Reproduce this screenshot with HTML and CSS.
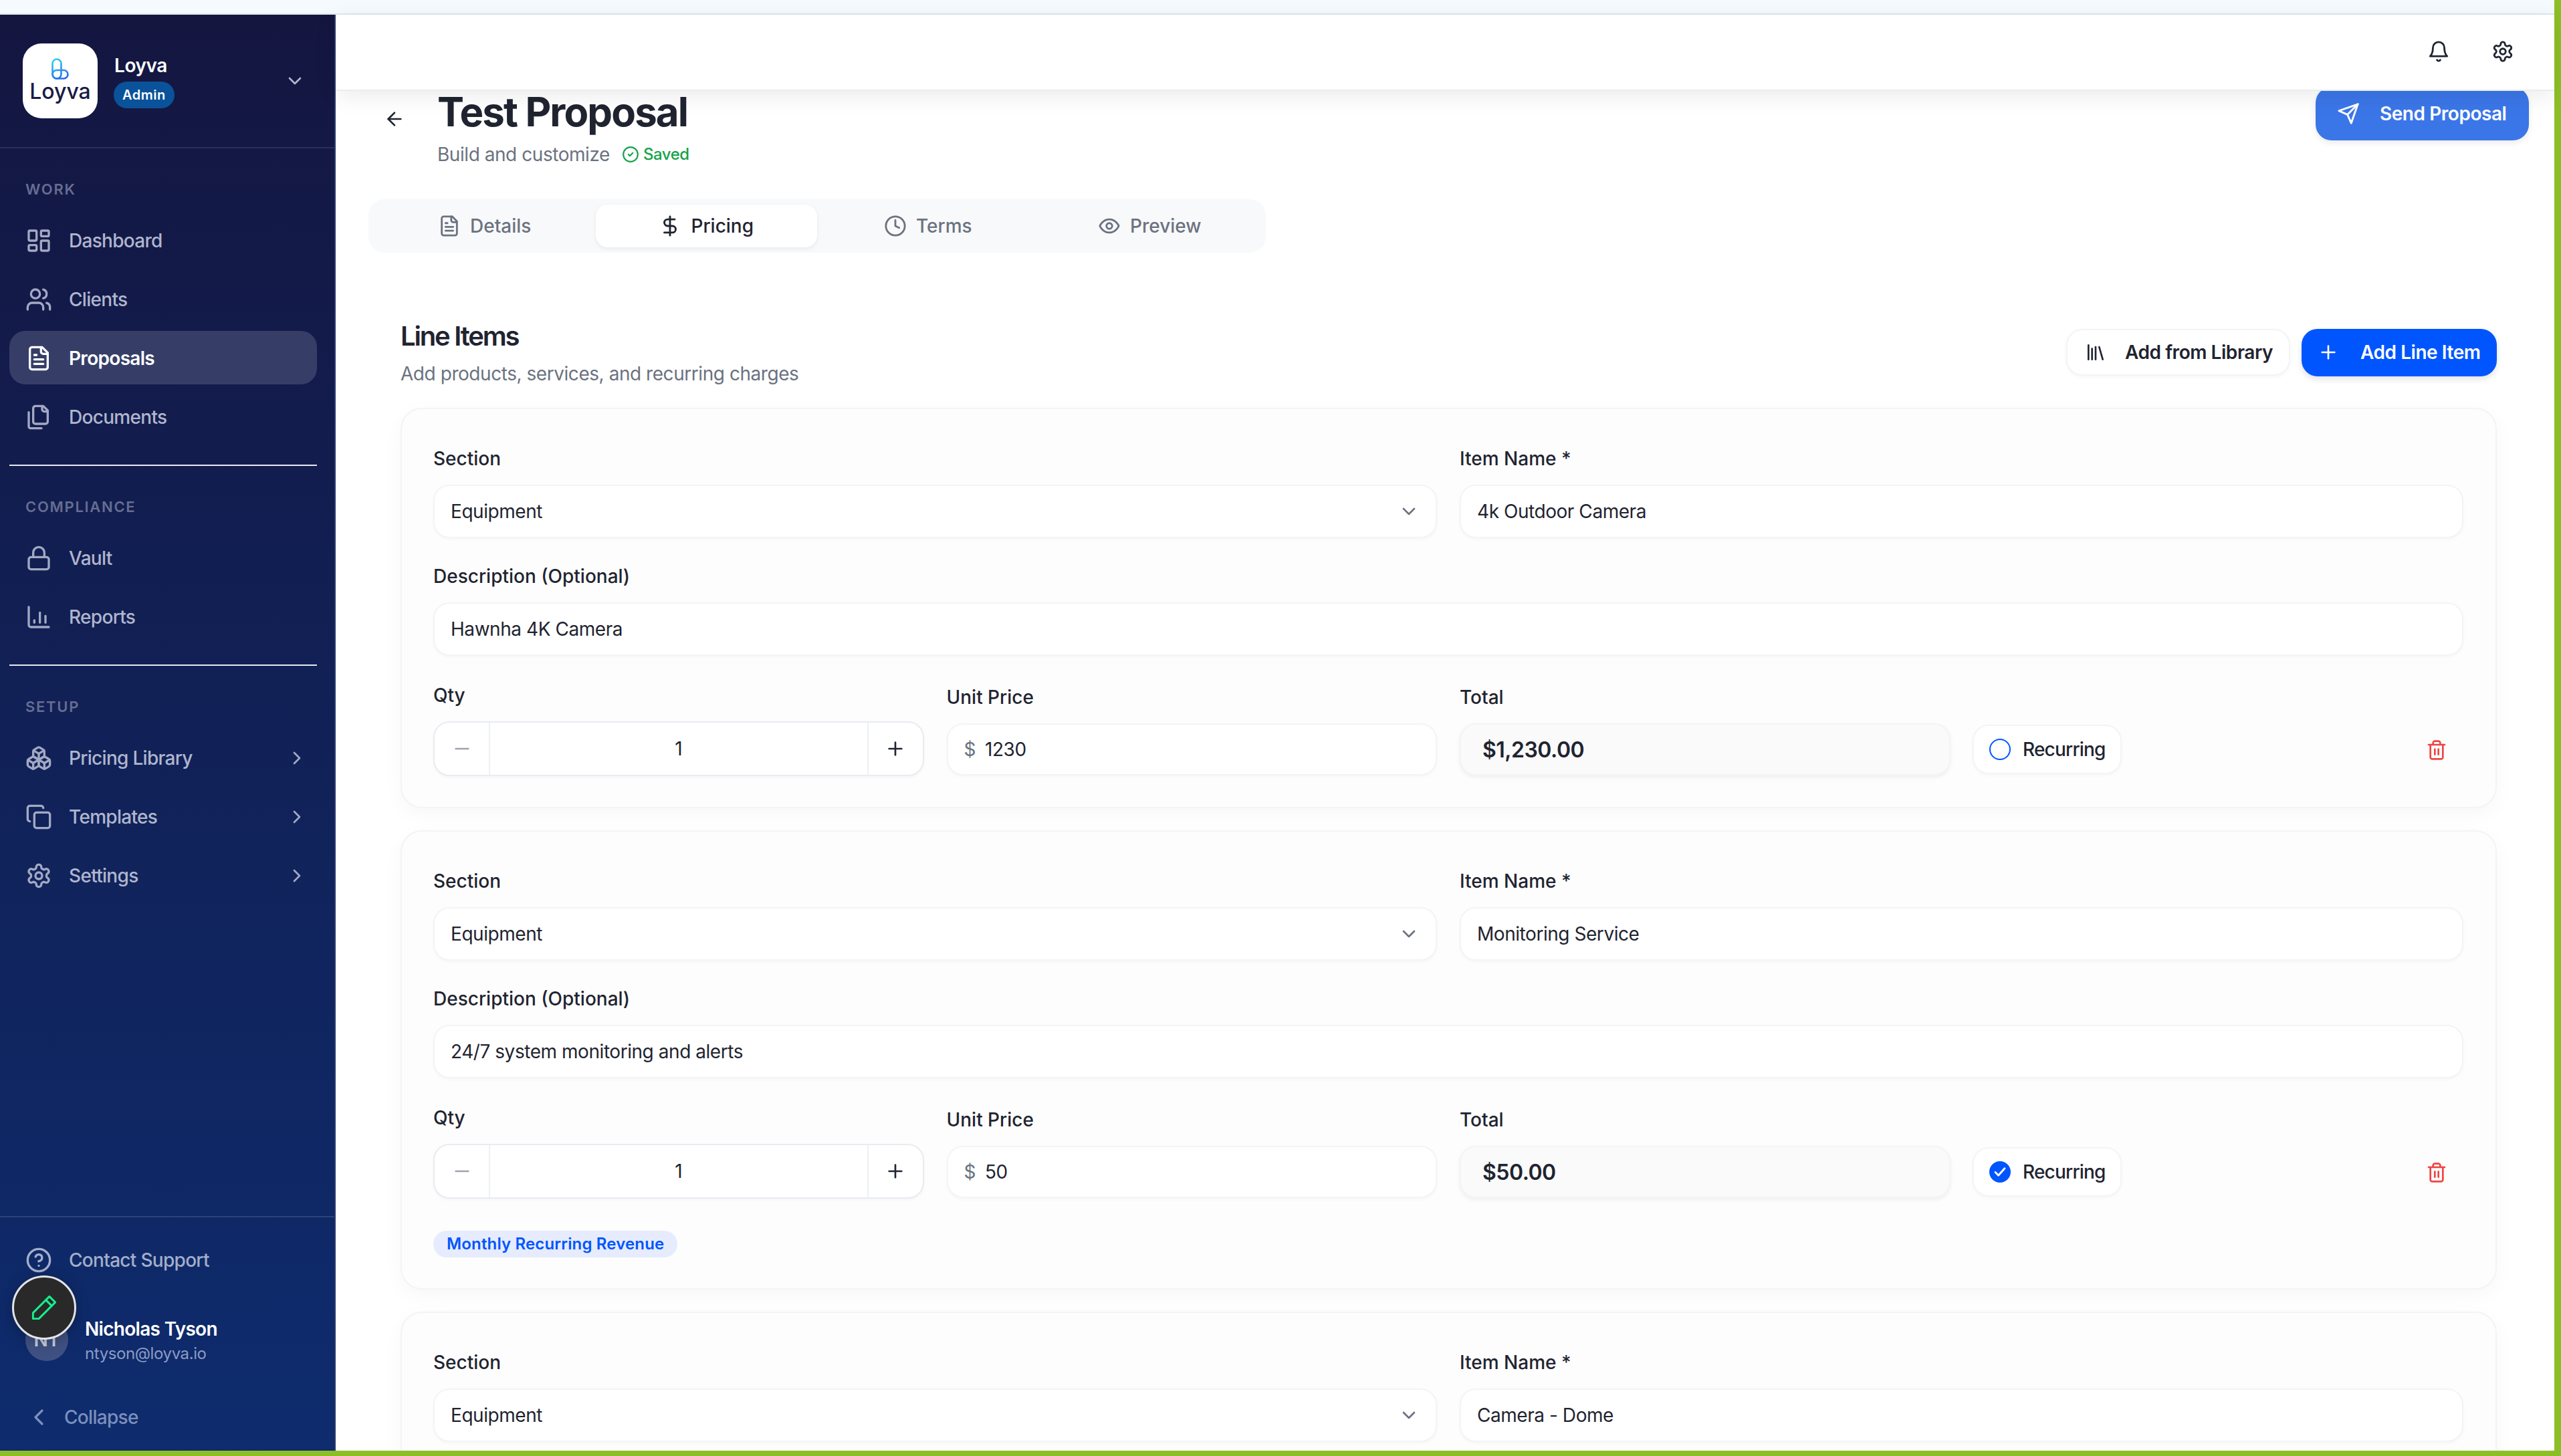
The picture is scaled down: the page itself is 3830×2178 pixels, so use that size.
FILE: index.html
```html
<!DOCTYPE html>
<html lang="en">
<head>
    <meta charset="UTF-8">
    <title>Test Proposal - Loyva</title>
    <link rel="stylesheet" href="styles.css">
</head>
<body>
    <!-- icon sprite -->
    <svg class="sprite" xmlns="http://www.w3.org/2000/svg">
        <symbol id="i-dashboard" viewBox="0 0 24 24"><rect x="3" y="3" width="7" height="9" rx="1"/><rect x="14" y="3" width="7" height="5" rx="1"/><rect x="14" y="12" width="7" height="9" rx="1"/><rect x="3" y="16" width="7" height="5" rx="1"/></symbol>
        <symbol id="i-users" viewBox="0 0 24 24"><path d="M16 21v-2a4 4 0 0 0-4-4H6a4 4 0 0 0-4 4v2"/><circle cx="9" cy="7" r="4"/><path d="M22 21v-2a4 4 0 0 0-3-3.87"/><path d="M16 3.13a4 4 0 0 1 0 7.75"/></symbol>
        <symbol id="i-file" viewBox="0 0 24 24"><path d="M15 2H6a2 2 0 0 0-2 2v16a2 2 0 0 0 2 2h12a2 2 0 0 0 2-2V7Z"/><path d="M14 2v4a2 2 0 0 0 2 2h4"/><path d="M10 9H8"/><path d="M16 13H8"/><path d="M16 17H8"/></symbol>
        <symbol id="i-files" viewBox="0 0 24 24"><path d="M20 7h-3a2 2 0 0 1-2-2V2"/><path d="M9 18a2 2 0 0 1-2-2V4a2 2 0 0 1 2-2h7l4 4v10a2 2 0 0 1-2 2Z"/><path d="M3 7.6v12.8A1.6 1.6 0 0 0 4.6 22h9.8"/></symbol>
        <symbol id="i-lock" viewBox="0 0 24 24"><rect x="3" y="11" width="18" height="11" rx="2"/><path d="M7 11V7a5 5 0 0 1 10 0v4"/></symbol>
        <symbol id="i-chart" viewBox="0 0 24 24"><path d="M3 3v16a2 2 0 0 0 2 2h16"/><path d="M8 17v-2"/><path d="M13 17V8"/><path d="M18 17v-6"/></symbol>
        <symbol id="i-boxes" viewBox="0 0 24 24"><path d="M2.97 12.92A2 2 0 0 0 2 14.63v3.24a2 2 0 0 0 .97 1.71l3 1.8a2 2 0 0 0 2.06 0L12 19v-5.5l-5-3-4.03 2.42Z"/><path d="m7 16.5-4.74-2.85"/><path d="m7 16.5 5-3"/><path d="M7 16.5v5.17"/><path d="M12 13.5V19l3.97 2.38a2 2 0 0 0 2.06 0l3-1.8a2 2 0 0 0 .97-1.71v-3.24a2 2 0 0 0-.97-1.71L17 10.5l-5 3Z"/><path d="m17 16.5-5-3"/><path d="m17 16.5 4.74-2.85"/><path d="M17 16.5v5.17"/><path d="M7.97 4.42A2 2 0 0 0 7 6.13v4.37l5 3 5-3V6.13a2 2 0 0 0-.97-1.71l-3-1.8a2 2 0 0 0-2.06 0l-3 1.8Z"/><path d="M12 8 7.26 5.15"/><path d="m12 8 4.74-2.85"/><path d="M12 13.5V8"/></symbol>
        <symbol id="i-copy" viewBox="0 0 24 24"><rect x="8" y="8" width="14" height="14" rx="2"/><path d="M4 16c-1.1 0-2-.9-2-2V4c0-1.1.9-2 2-2h10c1.1 0 2 .9 2 2"/></symbol>
        <symbol id="i-gear" viewBox="0 0 24 24"><path d="M12.22 2h-.44a2 2 0 0 0-2 2v.18a2 2 0 0 1-1 1.73l-.43.25a2 2 0 0 1-2 0l-.15-.08a2 2 0 0 0-2.73.73l-.22.38a2 2 0 0 0 .73 2.73l.15.1a2 2 0 0 1 1 1.72v.51a2 2 0 0 1-1 1.74l-.15.09a2 2 0 0 0-.73 2.73l.22.38a2 2 0 0 0 2.73.73l.15-.08a2 2 0 0 1 2 0l.43.25a2 2 0 0 1 1 1.73V20a2 2 0 0 0 2 2h.44a2 2 0 0 0 2-2v-.18a2 2 0 0 1 1-1.73l.43-.25a2 2 0 0 1 2 0l.15.08a2 2 0 0 0 2.73-.73l.22-.39a2 2 0 0 0-.73-2.73l-.15-.08a2 2 0 0 1-1-1.74v-.5a2 2 0 0 1 1-1.74l.15-.09a2 2 0 0 0 .73-2.73l-.22-.38a2 2 0 0 0-2.73-.73l-.15.08a2 2 0 0 1-2 0l-.43-.25a2 2 0 0 1-1-1.73V4a2 2 0 0 0-2-2z"/><circle cx="12" cy="12" r="3"/></symbol>
        <symbol id="i-help" viewBox="0 0 24 24"><circle cx="12" cy="12" r="10"/><path d="M9.09 9a3 3 0 0 1 5.83 1c0 2-3 3-3 3"/><path d="M12 17h.01"/></symbol>
        <symbol id="i-bell" viewBox="0 0 24 24"><path d="M6 8a6 6 0 0 1 12 0c0 7 3 9 3 9H3s3-2 3-9"/><path d="M10.3 21a1.94 1.94 0 0 0 3.4 0"/></symbol>
        <symbol id="i-send" viewBox="0 0 24 24"><path d="m22 2-7 20-4-9-9-4Z"/><path d="M22 2 11 13"/></symbol>
        <symbol id="i-library" viewBox="0 0 24 24"><path d="m16 6 4 14"/><path d="M12 6v14"/><path d="M8 8v12"/><path d="M4 4v16"/></symbol>
        <symbol id="i-plus" viewBox="0 0 24 24"><path d="M5 12h14"/><path d="M12 5v14"/></symbol>
        <symbol id="i-minus" viewBox="0 0 24 24"><path d="M5 12h14"/></symbol>
        <symbol id="i-trash" viewBox="0 0 24 24"><path d="M3 6h18"/><path d="M19 6v14c0 1-1 2-2 2H7c-1 0-2-1-2-2V6"/><path d="M8 6V4c0-1 1-2 2-2h4c1 0 2 1 2 2v2"/><path d="M10 11v6"/><path d="M14 11v6"/></symbol>
        <symbol id="i-back" viewBox="0 0 24 24"><path d="m12 19-7-7 7-7"/><path d="M19 12H5"/></symbol>
        <symbol id="i-check-circle" viewBox="0 0 24 24"><circle cx="12" cy="12" r="10"/><path d="m9 12 2 2 4-4"/></symbol>
        <symbol id="i-dollar" viewBox="0 0 24 24"><path d="M12 2v20"/><path d="M17 5H9.5a3.5 3.5 0 0 0 0 7h5a3.5 3.5 0 0 1 0 7H6"/></symbol>
        <symbol id="i-clock" viewBox="0 0 24 24"><circle cx="12" cy="12" r="10"/><path d="M12 6v6l4 2"/></symbol>
        <symbol id="i-eye" viewBox="0 0 24 24"><path d="M2 12s3-7 10-7 10 7 10 7-3 7-10 7-10-7-10-7Z"/><circle cx="12" cy="12" r="3"/></symbol>
        <symbol id="i-down" viewBox="0 0 24 24"><path d="m6 9 6 6 6-6"/></symbol>
        <symbol id="i-right" viewBox="0 0 24 24"><path d="m9 18 6-6-6-6"/></symbol>
        <symbol id="i-left" viewBox="0 0 24 24"><path d="m15 18-6-6 6-6"/></symbol>
        <symbol id="i-pencil" viewBox="0 0 24 24"><path d="M16.5 2.5 21.5 7.5 7.5 21.5 2.5 21.5 2.5 16.5Z"/><path d="M13.5 5.5 18.5 10.5"/></symbol>
    </svg>

    <div class="strip"></div>

    <div class="app">
        <!-- Sidebar -->
        <aside class="sidebar">
            <div class="brand">
                <div class="logo">
                    <svg class="logo-mark" viewBox="0 0 26 32">
                        <defs>
                            <linearGradient id="logo-grad" gradientUnits="userSpaceOnUse" x1="4" y1="0" x2="20" y2="32">
                                <stop offset="0" stop-color="#2fd6f0"/>
                                <stop offset="1" stop-color="#2563eb"/>
                            </linearGradient>
                        </defs>
                        <rect x="1.5" y="1.5" width="13" height="29" rx="6.5"/>
                        <rect x="1.5" y="18" width="23" height="12.5" rx="6.25"/>
                    </svg>
                    <span class="logo-text">Loyva</span>
                </div>
                <div class="brand-info">
                    <div class="brand-name">Loyva</div>
                    <span class="role-badge">Admin</span>
                </div>
                <svg class="ic brand-chevron"><use href="#i-down"/></svg>
            </div>

            <div class="nav-group">
                <div class="nav-label">Work</div>
                <a class="nav-item"><svg class="ic"><use href="#i-dashboard"/></svg>Dashboard</a>
                <a class="nav-item"><svg class="ic"><use href="#i-users"/></svg>Clients</a>
                <a class="nav-item active"><svg class="ic"><use href="#i-file"/></svg>Proposals</a>
                <a class="nav-item"><svg class="ic"><use href="#i-files"/></svg>Documents</a>
            </div>
            <div class="nav-group">
                <div class="nav-label">Compliance</div>
                <a class="nav-item"><svg class="ic"><use href="#i-lock"/></svg>Vault</a>
                <a class="nav-item"><svg class="ic"><use href="#i-chart"/></svg>Reports</a>
            </div>
            <div class="nav-group plain">
                <div class="nav-label">Setup</div>
                <a class="nav-item"><svg class="ic"><use href="#i-boxes"/></svg>Pricing Library<svg class="ic nav-chevron"><use href="#i-right"/></svg></a>
                <a class="nav-item"><svg class="ic"><use href="#i-copy"/></svg>Templates<svg class="ic nav-chevron"><use href="#i-right"/></svg></a>
                <a class="nav-item"><svg class="ic"><use href="#i-gear"/></svg>Settings<svg class="ic nav-chevron"><use href="#i-right"/></svg></a>
            </div>

            <div class="side-footer">
                <a class="nav-item"><svg class="ic"><use href="#i-help"/></svg>Contact Support</a>
                <div class="user">
                    <div class="avatar">NT</div>
                    <div class="user-text">
                        <div class="user-name">Nicholas Tyson</div>
                        <div class="user-mail">ntyson@loyva.io</div>
                    </div>
                </div>
                <div class="collapse"><svg class="ic"><use href="#i-left"/></svg>Collapse</div>
            </div>
        </aside>

        <!-- Main area -->
        <main class="main">
            <header class="topbar">
                <svg class="ic"><use href="#i-bell"/></svg>
                <svg class="ic"><use href="#i-gear"/></svg>
            </header>

            <div class="content">
                <div class="page-head">
                    <svg class="ic back"><use href="#i-back"/></svg>
                    <div class="page-titles">
                        <h1>Test Proposal</h1>
                        <div class="page-sub">Build and customize
                            <span class="saved"><svg class="ic"><use href="#i-check-circle"/></svg>Saved</span>
                        </div>
                    </div>
                    <button class="btn btn-send"><svg class="ic"><use href="#i-send"/></svg>Send Proposal</button>
                </div>

                <div class="tabs">
                    <div class="tab"><svg class="ic"><use href="#i-file"/></svg>Details</div>
                    <div class="tab active"><svg class="ic"><use href="#i-dollar"/></svg>Pricing</div>
                    <div class="tab"><svg class="ic"><use href="#i-clock"/></svg>Terms</div>
                    <div class="tab"><svg class="ic"><use href="#i-eye"/></svg>Preview</div>
                </div>

                <section class="items">
                    <div class="items-head">
                        <div>
                            <h2>Line Items</h2>
                            <p>Add products, services, and recurring charges</p>
                        </div>
                        <div class="items-actions">
                            <button class="btn btn-light"><svg class="ic"><use href="#i-library"/></svg>Add from Library</button>
                            <button class="btn btn-primary"><svg class="ic"><use href="#i-plus"/></svg>Add Line Item</button>
                        </div>
                    </div>

                    <!-- item 1 -->
                    <div class="card">
                        <div class="row-2">
                            <div>
                                <div class="field-label">Section</div>
                                <div class="field select">Equipment<svg class="ic"><use href="#i-down"/></svg></div>
                            </div>
                            <div>
                                <div class="field-label">Item Name *</div>
                                <div class="field">4k Outdoor Camera</div>
                            </div>
                        </div>
                        <div>
                            <div class="field-label">Description (Optional)</div>
                            <div class="field">Hawnha 4K Camera</div>
                        </div>
                        <div class="row-2 bottom amounts">
                            <div class="row-2 bottom">
                                <div>
                                    <div class="field-label">Qty</div>
                                    <div class="stepper">
                                        <span class="step minus"><svg class="ic"><use href="#i-minus"/></svg></span>
                                        <span class="step-value">1</span>
                                        <span class="step"><svg class="ic"><use href="#i-plus"/></svg></span>
                                    </div>
                                </div>
                                <div>
                                    <div class="field-label">Unit Price</div>
                                    <div class="field price"><span class="currency">$</span>1230</div>
                                </div>
                            </div>
                            <div class="total-row">
                                <div class="total-col">
                                    <div class="field-label">Total</div>
                                    <div class="field price total">$1,230.00</div>
                                </div>
                                <div class="recurring"><span class="radio"></span>Recurring</div>
                                <svg class="ic trash"><use href="#i-trash"/></svg>
                            </div>
                        </div>
                    </div>

                    <!-- item 2 -->
                    <div class="card">
                        <div class="row-2">
                            <div>
                                <div class="field-label">Section</div>
                                <div class="field select">Equipment<svg class="ic"><use href="#i-down"/></svg></div>
                            </div>
                            <div>
                                <div class="field-label">Item Name *</div>
                                <div class="field">Monitoring Service</div>
                            </div>
                        </div>
                        <div>
                            <div class="field-label">Description (Optional)</div>
                            <div class="field">24/7 system monitoring and alerts</div>
                        </div>
                        <div class="row-2 bottom amounts">
                            <div class="row-2 bottom">
                                <div>
                                    <div class="field-label">Qty</div>
                                    <div class="stepper">
                                        <span class="step minus"><svg class="ic"><use href="#i-minus"/></svg></span>
                                        <span class="step-value">1</span>
                                        <span class="step"><svg class="ic"><use href="#i-plus"/></svg></span>
                                    </div>
                                </div>
                                <div>
                                    <div class="field-label">Unit Price</div>
                                    <div class="field price"><span class="currency">$</span>50</div>
                                </div>
                            </div>
                            <div class="total-row">
                                <div class="total-col">
                                    <div class="field-label">Total</div>
                                    <div class="field price total">$50.00</div>
                                </div>
                                <div class="recurring"><span class="radio on"><svg class="ic" viewBox="0 0 24 24"><path d="m6 12.5 4 4 8-9"/></svg></span>Recurring</div>
                                <svg class="ic trash"><use href="#i-trash"/></svg>
                            </div>
                        </div>
                        <span class="mrr">Monthly Recurring Revenue</span>
                    </div>

                    <!-- item 3 -->
                    <div class="card">
                        <div class="row-2">
                            <div>
                                <div class="field-label">Section</div>
                                <div class="field select">Equipment<svg class="ic"><use href="#i-down"/></svg></div>
                            </div>
                            <div>
                                <div class="field-label">Item Name *</div>
                                <div class="field">Camera - Dome</div>
                            </div>
                        </div>
                    </div>
                </section>
            </div>
        </main>
    </div>

    <!-- floating widget over the sidebar -->
    <div class="pencil-fab"><svg class="ic"><use href="#i-pencil"/></svg></div>
</body>
</html>
```

FILE: styles.css
```css
* {
    box-sizing: border-box;
}
html, body {
    margin: 0;
    height: 100%;
}
body {
    width: 3830px;
    height: 2178px;
    overflow: hidden;
    position: relative;
    display: flex;
    flex-direction: column;
    background: #8cbf26;
    padding: 0 10px 8px 0;
    font-family: Inter, "Liberation Sans", sans-serif;
    color: #1f2430;
    font-size: 28px;
    letter-spacing: -0.45px;
}
.sprite {
    display: none;
}
.ic {
    fill: none;
    stroke: currentColor;
    stroke-width: 2;
    stroke-linecap: round;
    stroke-linejoin: round;
    flex-shrink: 0;
}
button {
    font-family: inherit;
    letter-spacing: inherit;
    border: 0;
}
h1, h2, p {
    margin: 0;
}

.strip {
    height: 22px;
    flex-shrink: 0;
    background: #f4fafd;
    border-bottom: 2px solid #dde8ee;
}
.app {
    flex: 1;
    display: flex;
    min-height: 0;
}

/* Sidebar */
.sidebar {
    width: 502px;
    flex-shrink: 0;
    display: flex;
    flex-direction: column;
    background: linear-gradient(180deg, #141640 0%, #0e2c6e 100%);
    border-right: 2px solid #2a3a6e;
    color: #b0b6ce;
}
.brand {
    height: 200px;
    display: flex;
    align-items: center;
    padding: 0 43px 0 34px;
    border-bottom: 2px solid rgba(255, 255, 255, 0.1);
}
.logo {
    width: 112px;
    height: 112px;
    border-radius: 28px;
    background: #fff;
    display: flex;
    flex-direction: column;
    align-items: center;
    padding-top: 22px;
}
.logo-mark {
    width: 26px;
    height: 32px;
    stroke: url(#logo-grad);
    fill: none;
    stroke-width: 2.6;
}
.logo-text {
    font-size: 32px;
    line-height: 36px;
    font-weight: 500;
    color: #1a1a45;
    letter-spacing: 0;
}
.brand-info {
    margin-left: 25px;
}
.brand-name {
    color: #fff;
    font-size: 28px;
    font-weight: 600;
    line-height: 36px;
}
.role-badge {
    display: inline-block;
    margin: 6px 0 0 -1px;
    height: 40px;
    line-height: 40px;
    padding: 0 13px;
    border-radius: 20px;
    background: #0a5299;
    color: #fff;
    font-size: 20px;
    font-weight: 600;
    letter-spacing: 0.5px;
}
.brand-chevron {
    margin-left: auto;
    width: 32px;
    height: 32px;
}
.nav-group {
    margin: 0 26px 0 14px;
    padding: 46px 0 32px;
    border-bottom: 2px solid #e6e8f0;
}
.nav-group.plain {
    border-bottom: 0;
}
.nav-label {
    height: 30px;
    line-height: 30px;
    margin: 0 0 21px 24px;
    font-size: 22px;
    font-weight: 600;
    letter-spacing: 1.7px;
    text-transform: uppercase;
    color: #666d92;
}
.nav-item {
    height: 80px;
    display: flex;
    align-items: center;
    gap: 25px;
    padding: 2px 24px 0;
    margin-bottom: 8px;
    border-radius: 24px;
    font-size: 28px;
    font-weight: 500;
    letter-spacing: -0.7px;
}
.nav-group .nav-item:last-child {
    margin-bottom: 0;
}
.nav-item .ic {
    width: 40px;
    height: 40px;
    color: #a3a9c3;
}
.nav-item.active {
    background: #363e68;
    color: #fff;
    font-weight: 600;
}
.nav-item.active .ic {
    color: #fff;
}
.nav-item .nav-chevron {
    margin-left: auto;
    width: 32px;
    height: 32px;
    margin-right: -10px;
}
.side-footer {
    margin-top: auto;
    padding: 23px 0 20px;
    border-top: 2px solid rgba(255, 255, 255, 0.12);
}
.side-footer .nav-item {
    margin: 0 14px;
    color: #a3aeca;
}
.side-footer .nav-item .ic {
    color: #a3aeca;
}
.user {
    height: 64px;
    display: flex;
    align-items: center;
    gap: 25px;
    margin: 48px 0 0 38px;
}
.user-text {
    margin-top: 4px;
}
.avatar {
    width: 64px;
    height: 64px;
    border-radius: 50%;
    background: #3f5182;
    color: #c9cfe0;
    font-weight: 600;
    display: flex;
    align-items: center;
    justify-content: center;
}
.user-name {
    color: #fff;
    font-weight: 600;
    font-size: 28px;
    line-height: 36px;
    letter-spacing: -0.7px;
}
.user-mail {
    margin-top: 1px;
    color: #8d9bc4;
    font-size: 24px;
    line-height: 36px;
    letter-spacing: -0.4px;
}
.collapse {
    height: 60px;
    margin: 54px 0 0 38px;
    display: flex;
    align-items: center;
    gap: 18px;
    color: #7c8fbd;
    font-weight: 500;
    letter-spacing: -0.7px;
}
.collapse .ic {
    width: 40px;
    height: 40px;
}
.pencil-fab {
    position: absolute;
    left: 18px;
    top: 1908px;
    width: 96px;
    height: 96px;
    border-radius: 50%;
    background: #292929;
    border: 3px solid #e4e4e6;
    color: #14f08c;
    display: flex;
    align-items: center;
    justify-content: center;
    box-shadow: 0 4px 20px rgba(0, 0, 0, 0.25);
}
.pencil-fab .ic {
    width: 42px;
    height: 42px;
    stroke-width: 1.7;
}

/* Main */
.main {
    flex: 1;
    min-width: 0;
    display: flex;
    flex-direction: column;
    background: #fff;
}
.topbar {
    height: 114px;
    flex-shrink: 0;
    position: relative;
    z-index: 2;
    display: flex;
    align-items: center;
    justify-content: flex-end;
    gap: 62px;
    padding: 0 60px 2px 0;
    background: #fff;
    border-bottom: 2px solid #e9edf1;
    box-shadow: 0 8px 32px rgba(0, 0, 0, 0.08);
}
.topbar .ic {
    width: 34px;
    height: 34px;
}
.content {
    flex: 1;
    min-height: 0;
    overflow: hidden;
    padding: 0 38px 0 49px;
    margin-top: -5px;
}
.page-head {
    display: flex;
    align-items: flex-start;
    padding-left: 27px;
}
.back {
    width: 32px;
    height: 32px;
    margin: 31px 48px 0 -4px;
}
.page-titles {
    flex: 1;
}
h1 {
    font-size: 60px;
    line-height: 72px;
    font-weight: 700;
    letter-spacing: -1.9px;
}
.page-sub {
    margin-top: 8px;
    line-height: 40px;
    color: #6b7280;
    display: flex;
    align-items: center;
    gap: 18px;
}
.saved {
    display: inline-flex;
    align-items: center;
    gap: 6px;
    color: #16a34a;
    font-size: 24px;
    font-weight: 500;
}
.saved .ic {
    width: 26px;
    height: 26px;
}
.btn {
    display: inline-flex;
    align-items: center;
    border-radius: 24px;
    font-size: 28px;
    font-weight: 600;
}
.btn-send {
    width: 319px;
    height: 80px;
    margin-top: -1px;
    gap: 30px;
    padding-left: 32px;
    background: #3b76e8;
    color: #fff;
    box-shadow: 0 4px 10px rgba(0, 0, 0, 0.08);
}
.btn-send .ic {
    width: 34px;
    height: 34px;
}

/* Tabs */
.tabs {
    width: 1342px;
    height: 80px;
    margin-top: 47px;
    padding: 8px;
    display: grid;
    grid-template-columns: repeat(4, 1fr);
    background: #f8f9fb;
    border-radius: 24px;
}
.tab {
    display: flex;
    align-items: center;
    justify-content: center;
    gap: 14px;
    border-radius: 18px;
    color: #6b7280;
    font-weight: 500;
    letter-spacing: 0;
}
.tab .ic {
    width: 34px;
    height: 34px;
}
.tab.active {
    background: #fff;
    color: #1f2430;
    box-shadow: 0 2px 6px rgba(0, 0, 0, 0.07);
}

/* Line items */
.items {
    padding: 97px 48px 0;
}
.items-head {
    display: flex;
    justify-content: space-between;
    align-items: center;
    margin-bottom: 31px;
}
h2 {
    font-size: 40px;
    line-height: 56px;
    font-weight: 600;
    letter-spacing: -2.2px;
}
.items-head p {
    margin-top: 8px;
    line-height: 40px;
    color: #6b7280;
}
.items-actions {
    display: flex;
    gap: 17px;
}
.btn-light {
    width: 335px;
    height: 70px;
    gap: 28px;
    padding-left: 26px;
    background: #fff;
    color: #1f2430;
    border: 2px solid #f3f4f6;
    box-shadow: 0 2px 6px rgba(0, 0, 0, 0.04);
}
.btn-primary {
    width: 292px;
    height: 71px;
    gap: 32px;
    padding-left: 24px;
    background: #0055ff;
    color: #fff;
    box-shadow: 0 4px 10px rgba(0, 0, 0, 0.12);
}
.btn-light .ic, .btn-primary .ic {
    width: 32px;
    height: 32px;
}
.card {
    display: flex;
    flex-direction: column;
    gap: 31px;
    padding: 48px 48px 46px 47px;
    margin-bottom: 33px;
    background: #fdfdfd;
    border: 2px solid #f3f4f6;
    border-radius: 32px;
    box-shadow: 0 8px 30px rgba(20, 40, 90, 0.035);
}
.row-2 {
    display: grid;
    grid-template-columns: 1fr 1fr;
    gap: 34px;
}
.row-2.bottom {
    align-items: end;
}
.amounts {
    margin-top: 2px;
}
.field-label {
    height: 52px;
    line-height: 52px;
    margin-bottom: 13px;
    font-weight: 500;
    letter-spacing: 0;
}
.field {
    height: 80px;
    display: flex;
    align-items: center;
    padding: 0 24px;
    background: #fff;
    border: 2px solid #f3f4f6;
    border-radius: 24px;
    box-shadow: 0 2px 5px rgba(0, 0, 0, 0.03);
}
.select {
    justify-content: space-between;
}
.select .ic {
    width: 32px;
    height: 32px;
    color: #6b7280;
}
.price {
    height: 78px;
    margin-bottom: 1px;
}
.currency {
    color: #6b7280;
    margin-right: 14px;
}
.total {
    background: #fafafa;
    font-size: 32px;
    font-weight: 600;
    letter-spacing: -0.5px;
    padding-left: 32px;
    box-shadow: 0 3px 6px rgba(0, 0, 0, 0.06);
}
.stepper {
    height: 82px;
    display: flex;
    align-items: stretch;
    background: #fff;
    border: 2px solid #e8ecf1;
    border-radius: 24px;
    box-shadow: 0 2px 4px rgba(0, 0, 0, 0.04);
}
.step {
    width: 81px;
    display: flex;
    align-items: center;
    justify-content: center;
}
.step .ic {
    width: 32px;
    height: 32px;
}
.step.minus {
    color: #9ca3af;
}
.step-value {
    flex: 1;
    display: flex;
    align-items: center;
    justify-content: center;
    border: solid #eef0f3;
    border-width: 0 2px;
}
.total-row {
    display: flex;
    align-items: flex-end;
}
.total-col {
    width: 734px;
    flex-shrink: 0;
}
.recurring {
    width: 223px;
    height: 74px;
    margin: 0 0 3px 33px;
    display: flex;
    align-items: center;
    gap: 18px;
    padding-left: 23px;
    background: #fff;
    border: 2px solid #f3f4f6;
    border-radius: 24px;
    box-shadow: 0 2px 5px rgba(0, 0, 0, 0.03);
    font-weight: 500;
    letter-spacing: -0.8px;
}
.radio {
    width: 32px;
    height: 32px;
    border-radius: 50%;
    border: 2px solid #0055ff;
    display: flex;
    align-items: center;
    justify-content: center;
}
.radio.on {
    background: #0055ff;
    color: #fff;
}
.radio .ic {
    width: 28px;
    height: 28px;
    stroke-width: 2.4;
}
.trash {
    width: 32px;
    height: 32px;
    margin: 0 24px 23px auto;
    color: #ef4444;
}
.mrr {
    align-self: flex-start;
    height: 40px;
    line-height: 40px;
    margin-top: 17px;
    padding: 0 20px;
    border-radius: 20px;
    background: #e6ecfd;
    color: #0055ff;
    font-size: 24px;
    font-weight: 600;
    letter-spacing: 0.15px;
}
```
